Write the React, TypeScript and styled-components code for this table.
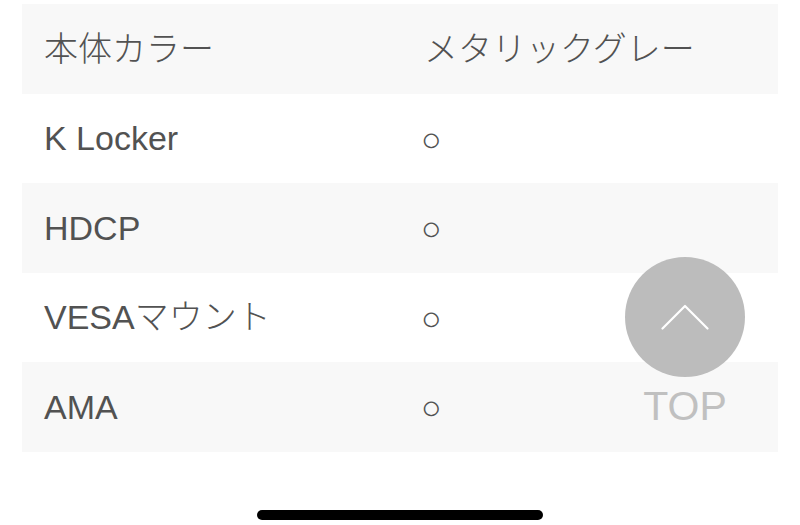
import React from "react";
import styled, { createGlobalStyle } from "styled-components";

const GlobalStyle = createGlobalStyle`
  html, body {
    margin: 0;
    padding: 0;
    background: #ffffff;
  }
  body {
    width: 800px;
    height: 525px;
    overflow: hidden;
    font-family: "Liberation Sans", "Noto Sans CJK JP", sans-serif;
  }
`;

const Page = styled.div`
  position: relative;
  width: 800px;
  height: 525px;
  padding: 4px 22px 0;
  box-sizing: border-box;
`;

const Table = styled.div`
  display: flex;
  flex-direction: column;
`;

const Row = styled.div<{ $shaded: boolean }>`
  display: grid;
  grid-template-columns: 380px 1fr;
  align-items: center;
  height: 89.5px;
  padding-left: 22px;
  background: ${(p) => (p.$shaded ? "#f8f8f8" : "#ffffff")};
  color: #525252;
  font-size: 34px;
  font-weight: 300;
  line-height: 1;
`;

const Cell = styled.div`
  white-space: nowrap;
`;

const Mark = styled.span`
  display: inline-block;
  margin-left: -3px;
  margin-top: 1px;
`;

const TopButton = styled.div`
  position: absolute;
  left: 625px;
  top: 257px;
  display: flex;
  flex-direction: column;
  align-items: center;
  gap: 9px;
`;

const Circle = styled.div`
  width: 120px;
  height: 120px;
  border-radius: 50%;
  background: #bcbcbc;
  display: flex;
  align-items: center;
  justify-content: center;
`;

const TopLabel = styled.div`
  font-family: "Liberation Sans", sans-serif;
  font-size: 41px;
  line-height: 1;
  color: #c0c0c0;
`;

const HomeBar = styled.div`
  position: absolute;
  left: 257px;
  top: 510px;
  width: 286px;
  height: 10px;
  border-radius: 5px;
  background: #000;
`;

const rows: [string, string][] = [
  ["本体カラー", "メタリックグレー"],
  ["K Locker", "○"],
  ["HDCP", "○"],
  ["VESAマウント", "○"],
  ["AMA", "○"],
];

export default function App() {
  return (
    <>
      <GlobalStyle />
      <Page>
        <Table>
          {rows.map(([k, v], i) => (
            <Row key={k} $shaded={i % 2 === 0}>
              <Cell>{k}</Cell>
              <Cell>{v === "○" ? <Mark>{v}</Mark> : v}</Cell>
            </Row>
          ))}
        </Table>
        <TopButton>
          <Circle>
            <svg width="48" height="26" viewBox="0 0 48 26" fill="none">
              <path d="M1.5 24.5 L24 2 L46.5 24.5" stroke="#ffffff" strokeWidth="2.2" strokeLinecap="round" strokeLinejoin="round" />
            </svg>
          </Circle>
          <TopLabel>TOP</TopLabel>
        </TopButton>
        <HomeBar />
      </Page>
    </>
  );
}
